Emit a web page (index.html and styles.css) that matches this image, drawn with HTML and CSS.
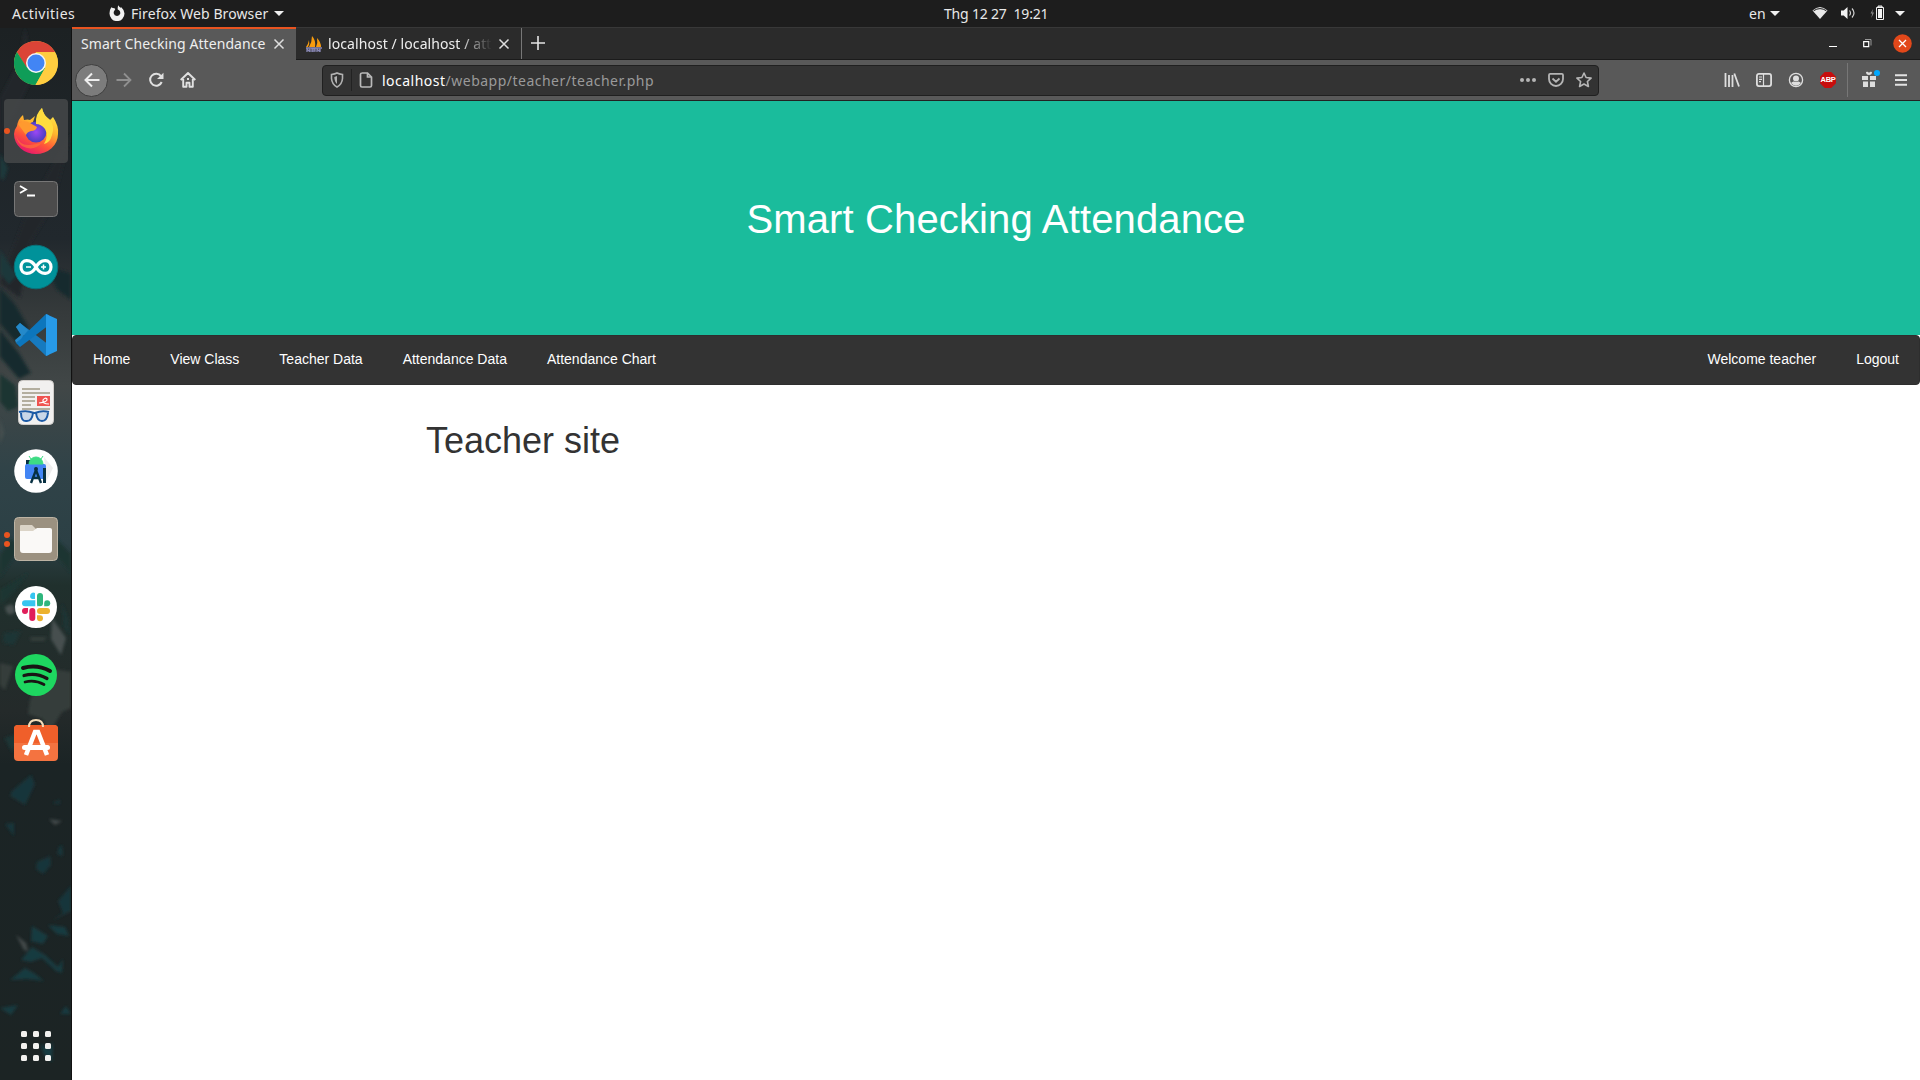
FILE: index.html
```html
<!DOCTYPE html>
<html lang="en">
<head>
<meta charset="utf-8">
<title>Smart Checking Attendance</title>
<link rel="stylesheet" href="styles.css">
</head>
<body>
<div class="desktop">
  <header class="topbar">
    <span class="activities">Activities</span>
    <div class="app-menu">
      <svg class="app-icon" width="16" height="16" viewBox="0 0 16 16"><path fill="#f2f2f2" d="M2.300 2.200Q3.100 3 4 3Q5.500 3 6.300 4L5.500 5.600Q4.500 6.500 4.700 8.200A3.400 3.400 0 0 0 11.300 8.500Q11.500 6.500 10.100 5.200L8.800 4.600Q8.400 2.500 9.300.3Q10.100 2 11.700 2.700L12.300 2.200Q15.500 5 15.500 8.600A7.500 7.500 0 0 1 .5 8.600Q.4 5 2.300 2.200Z"/></svg>
      <span class="app-name">Firefox Web Browser</span>
      <i class="caret"></i>
    </div>
    <div class="clock"><span>Thg 12 27</span><span>19:21</span></div>
    <div class="tray">
      <span class="lang">en</span><i class="caret"></i>
      <svg class="wifi" width="16" height="14" viewBox="0 0 16 14"><path fill="#e8e8e8" d="M.5 4.500Q8-2.500 15.500 4.500L8 13Z"/><path d="M1.600 4.800Q8 .4 14.400 4.800" fill="none" stroke="#1d1d1d" stroke-width="1"/></svg>
      <svg class="volume" width="16" height="14" viewBox="0 0 16 14"><path fill="#f2f2f2" d="M1 4.500h2.700L7.500 1v12L3.700 9.500H1z"/><path d="M9.500 4.500q2 2.500 0 5M12 2.500q4 4.500 0 9" fill="none" stroke="#cfcfcf" stroke-width="1.200"/></svg>
      <svg class="battery" width="16" height="16" viewBox="0 0 16 16"><path d="M4 4 1.500 8.500h1.700L2.300 13 5 7.500H3.300z" fill="#888"/><path d="M7.500 2.500h7v12h-7zM9 1h4v1H9z" fill="none" stroke="#f2f2f2"/><path fill="#f2f2f2" d="M9 4h4v9H9z"/></svg>
      <i class="caret"></i>
    </div>
  </header>
  <div class="workspace">
    <nav class="dock">
      <svg class="wallpaper" width="71" height="1052" viewBox="0 0 71 1052">
        <defs>
          <linearGradient id="wall" x1="0" y1="0" x2="0" y2="1">
            <stop offset="0" stop-color="#1c2123"/><stop offset=".2" stop-color="#21282d"/><stop offset=".27" stop-color="#353a3b"/><stop offset=".34" stop-color="#414747"/><stop offset=".42" stop-color="#304348"/><stop offset=".49" stop-color="#2c4045"/><stop offset=".53" stop-color="#20302d"/><stop offset=".65" stop-color="#242a2a"/><stop offset=".7" stop-color="#1b2425"/><stop offset="1" stop-color="#1c2424"/>
          </linearGradient>
          <filter id="soft"><feGaussianBlur stdDeviation="1.400"/></filter>
        </defs>
        <rect width="71" height="1052" fill="url(#wall)"/>
        <g filter="url(#soft)">
          <path fill="#23282c" d="M25 0 35 45 15 85 0 105V70L18 35ZM71 105 52 180 30 215 20 270 0 255 28 180Z"/>
          <path fill="#1a373b" d="M0 125 8 140 4 152 0 150ZM0 222 17 248 9 256 0 245Z"/>
          <path fill="#172c2e" d="M45 238 71 245V272L57 262ZM0 260 15 276 29 300 19 318 0 296ZM0 302 19 325 31 345 19 351 0 329Z"/>
          <path fill="#1b3533" d="M0 346 15 357 18 379 8 383 0 374ZM20 520 0 550V527L11 510ZM0 562 28 545 12 566 0 577ZM44 497 71 526V545L49 520Z"/>
          <path fill="#46504f" d="M0 390 4 405 0 416ZM5 579q10-7 10 5q-8 7-10-5ZM52 590 66 610 61 627 51 611Z"/>
          <path fill="#353c3b" d="M30 609h17l-3 4H31ZM30 672 48 640 71 644V680L62 684 49 705 43 691 28 686ZM0 635 13 638 5 662 0 657Z"/>
          <path fill="#1b3435" d="M62 575 68 590 70 606 64 600ZM4 605 21 603 14 617 3 615ZM4 710 22 704 12 724Z"/>
          <path fill="#18363a" d="M12 763 31 747 35 756 25 777 10 768ZM5 796 14 808 14 795ZM52 775 60 772 60 776ZM37 834 50 828 51 837 43 846 36 841ZM59 819 62 817 63 828 57 826ZM71 858 58 873 63 885 53 892 71 883Z"/>
          <path fill="#173b40" d="M32 898 48 908 43 916 31 913ZM48 897 65 899 69 908 57 906ZM21 932 32 919 45 927 58 939 63 931 62 945 56 943 42 930 31 934ZM10 952 25 940 34 945 44 953 27 951ZM0 980 18 977 11 987ZM60 986 66 978 71 986ZM40 1016 49 1021 53 1014 52 1034 44 1026Z"/>
          <path fill="#42494a" d="M16 907 26 915 28 923 24 922ZM49 791 62 793 55 797Z"/>
        </g>
      </svg>
      <div class="dock-item">
        <svg width="46" height="46" viewBox="0 0 46 46"><circle cx="23" cy="23" r="22" fill="#fdc93d"/><path fill="#db4437" d="M3.900 12A22 22 0 0 1 42.100 12H23l-9.500 16Z"/><path fill="#0f9d58" d="M3.900 12A22 22 0 0 0 22.500 45L32 28l-18.500-1Z"/><path fill="#ffcd40" d="M42.200 12.500A22 22 0 0 1 22.500 45l10-17.500L27 12.500Z"/><circle cx="23" cy="23" r="10" fill="#f5f5f5"/><circle cx="23" cy="23" r="8.500" fill="#4285f4"/></svg>
      </div>
      <div class="dock-item focused">
        <i class="dots one"></i>
        <svg width="46" height="48" viewBox="0 0 46 48">
          <defs><linearGradient id="flame" x1=".8" y1="0" x2=".3" y2="1"><stop offset="0" stop-color="#fff34f"/><stop offset=".4" stop-color="#ffb52d"/><stop offset=".7" stop-color="#ff5638"/><stop offset="1" stop-color="#e6156f"/></linearGradient><radialGradient id="globe"><stop offset="0" stop-color="#9b47f5"/><stop offset="1" stop-color="#4a3fc2"/></radialGradient></defs>
          <path fill="url(#flame)" d="M4 19Q5 12 10 8l1 5q4-1 6 0l5-4-2 6 6 1Q23 7 29 1q1 7 8 12l3-3Q46 19 45 27A22 20 0 0 1 1 27q0-4 3-8Z"/>
          <circle cx="23" cy="25" r="10.500" fill="url(#globe)"/>
          <path fill="#ff9a2f" d="M5 17q6-5 12-1l7 4q-1 4-6 4-4 1-5 4-5-7-8-11Z"/>
          <path fill="#ffdc3e" d="M29 1q1 7 8 12 5 6 2 15-2 8-8 9 5-8 1-15-4-5-9-5-1-10 6-16Z"/>
          <path fill="#ff7139" opacity=".7" d="M3 29q4 10 14 9l12-2q-9 9-20 3-5-4-6-10Z"/>
        </svg>
      </div>
      <div class="dock-item">
        <svg width="44" height="36" viewBox="0 0 44 36"><rect x=".5" y=".5" width="43" height="35" rx="4" fill="#4c4c4c" stroke="#777"/><path d="m6 5 6 3.500L6 12M13 14.500h8" fill="none" stroke="#fff" stroke-width="1.800"/></svg>
      </div>
      <div class="dock-item">
        <svg width="46" height="46" viewBox="0 0 46 46"><circle cx="23" cy="23" r="21.800" fill="#00929a" stroke="#087279"/><path d="M23 23C18 14 8 15 8 23s10 9 15 0 15-8 15 0-10 9-15 0Z" fill="none" stroke="#fff" stroke-width="3.200"/><path d="M13 23h5M28 23h5m-2.500-2.500v5" stroke="#fff" stroke-width="1.500"/></svg>
      </div>
      <div class="dock-item">
        <svg width="44" height="44" viewBox="0 0 44 44"><path d="M2 14 6 10 35 32V42L32 43Z" fill="#167abf"/><path d="M2 30 6 34 35 12V2L32 1Z" fill="#0c76bd"/><path d="m2 14 4-4 8 7-7 9-5 4-1-3 6-5Z" fill="#2489ca"/><path d="M32 1 43 6v32l-11 5V1Z" fill="#279ae8"/></svg>
      </div>
      <div class="dock-item">
        <svg width="36" height="46" viewBox="0 0 36 46"><rect x=".5" y=".5" width="35" height="44" rx="4" fill="#f1f0ef" stroke="#d0cdca"/><path d="M4 9h18M4 13h28M4 17h13M4 21h13M4 25h9M4 29h28" stroke="#b3ae9f" stroke-width="1.800"/><rect x="19" y="16" width="13" height="10" fill="#ef5350"/><path d="M21 23q9-1 8-4-2-2-4 1-1 4 6 4" fill="none" stroke="#fff" stroke-width="1.200"/><path d="M1 32q8-2 15 1h1q7-3 14-1M3 33q0 9 6 8 5 0 6-8M18 33q1 8 6 8 5 0 6-8" fill="#c9d7e8" stroke="#1d5ba6" stroke-width="2"/></svg>
      </div>
      <div class="dock-item">
        <svg width="44" height="44" viewBox="0 0 44 44"><circle cx="22" cy="22" r="21.800" fill="#fff"/><path d="m30 8 9 11-7 14Z" fill="#eee"/><path d="M12 11h6v9h-6z" fill="#073042"/><rect x="11" y="15" width="21" height="15" rx="2" fill="#4285f4"/><path d="M15 15a7 7 0 0 1 14 0ZM17 10l-2-3m12 3 2-3" fill="#3ddc84" stroke="#3ddc84"/><path d="m17 34 5-13 5 13M20 29h6" fill="none" stroke="#073042" stroke-width="2.400"/><path d="M29 19h3v15h-3z" fill="#073042"/><circle cx="22" cy="20" r="2" fill="#073042"/></svg>
      </div>
      <div class="dock-item">
        <i class="dots two"></i>
        <svg width="44" height="44" viewBox="0 0 44 44"><rect x=".5" y=".5" width="43" height="43" rx="4" fill="#9b9180" stroke="#bdb4a4"/><path d="M6 13V9q0-1 1-1h11l4 4h14q2 0 2 2v5H6Z" fill="#dbd4c7"/><path d="M6 14h13l4-3h13q2 0 2 2v20q0 3-3 3H9q-3 0-3-3Z" fill="#faf9f7"/></svg>
      </div>
      <div class="dock-item">
        <svg width="42" height="42" viewBox="0 0 42 42"><circle cx="21" cy="21" r="21" fill="#fff"/><g fill="#36c5f0"><rect x="7" y="14.300" width="19" height="6" rx="3" /><path d="M20 7v6h-3a3 3 0 1 1 3-6Z"/></g><g fill="#2eb67d"><rect x="22" y="7" width="6" height="13.300" rx="3"/><path d="M29.200 20.300v-3a3 3 0 1 1 3 3Z"/></g><path fill="#fff" d="M20.300 14h1.700v7h-1.700z"/><g fill="#ecb22e"><rect x="22" y="22" width="13" height="6" rx="3"/><path d="M22 29.200h3a3 3 0 1 1-3 3Z"/></g><g fill="#e01e5a"><rect x="14.300" y="22" width="6" height="13" rx="3"/><path d="M13 22v3a3 3 0 1 1-3-3Z"/></g></svg>
      </div>
      <div class="dock-item">
        <svg width="42" height="42" viewBox="0 0 42 42"><circle cx="21" cy="21" r="21" fill="#1ed760"/><path d="M8 14q14-4 27 3" fill="none" stroke="#191414" stroke-width="4" stroke-linecap="round"/><path d="M9 21.500q12-3.500 23 3" fill="none" stroke="#191414" stroke-width="3.200" stroke-linecap="round"/><path d="M10 28q10-2.500 19 2.500" fill="none" stroke="#191414" stroke-width="2.700" stroke-linecap="round"/></svg>
      </div>
      <div class="dock-item store">
        <svg width="44" height="44" viewBox="0 0 44 44"><rect y="7" width="44" height="36" rx="4" fill="#f47340"/><path d="M0 25V11q0-4 4-4h36q4 0 4 4v14Z" fill="#f05f2a"/><path d="M15 9q0-7 7-7t7 7" fill="none" stroke="#f4dcb8" stroke-width="2"/><path d="m12 37 9-23h3l9 23" fill="none" stroke="#fff" stroke-width="4.500"/><rect x="8" y="27" width="28" height="5" rx="2.500" fill="#fff"/></svg>
      </div>
      <svg class="show-apps" width="30" height="30" viewBox="0 0 30 30"><g fill="#f2f1ef"><rect width="6" height="6" rx="1.500"/><rect x="12" width="6" height="6" rx="1.500"/><rect x="24" width="6" height="6" rx="1.500"/><rect y="12" width="6" height="6" rx="1.500"/><rect x="12" y="12" width="6" height="6" rx="1.500"/><rect x="24" y="12" width="6" height="6" rx="1.500"/><rect y="24" width="6" height="6" rx="1.500"/><rect x="12" y="24" width="6" height="6" rx="1.500"/><rect x="24" y="24" width="6" height="6" rx="1.500"/></g></svg>
    </nav>
    <main class="browser">
      <div class="tabs">
        <div class="tab active"><span class="tab-title">Smart Checking Attendance</span><svg width="12" height="12" viewBox="0 0 12 12"><path d="m1.500 1.500 9 9m0-9-9 9" stroke="#dedede" stroke-width="1.500"/></svg></div>
        <div class="tab"><svg class="favicon" width="18" height="18" viewBox="0 0 18 18"><path fill="#f89c0e" d="M7 1q4 4 3 11H4q3-5 3-11ZM12 3q4 4 4 9h-5q2-4 1-9ZM4 5q1 4-1 7H1q2-2 3-7Z"/><path d="M1 13h16M2 17v-3l2 2 1-2v3m2 0v-3h3v2H7m5 1v-3l2 2 1-2v3" fill="none" stroke="#8988b5" stroke-width="1.300"/></svg><span class="tab-title faded">localhost / localhost / att</span><svg width="12" height="12" viewBox="0 0 12 12"><path d="m1.500 1.500 9 9m0-9-9 9" stroke="#dedede" stroke-width="1.500"/></svg></div>
        <svg class="new-tab" width="14" height="14" viewBox="0 0 14 14"><path d="M7 0v14M0 7h14" stroke="#e4e4e4" stroke-width="1.600"/></svg>
        <div class="window-controls">
          <svg width="9" height="9" viewBox="0 0 9 9"><path d="M0 7.500h8" stroke="#fff"/></svg>
          <svg width="9" height="9" viewBox="0 0 9 9"><path d="M.7 2.700h5v5h-5z" fill="none" stroke="#fff" stroke-width="1.200"/><path d="M2 .5h6v6" fill="none" stroke="#999"/></svg>
          <svg class="close" width="19" height="19" viewBox="0 0 19 19"><circle cx="9.500" cy="9.500" r="9.300" fill="#e2481a"/><path d="m6 6 7 7m0-7-7 7" stroke="#fff" stroke-width="1.300"/></svg>
        </div>
      </div>
      <div class="toolbar">
        <div class="nav-buttons">
          <span class="back"><svg width="16" height="16" viewBox="0 0 16 16"><path d="M15.500 8H1.500M8 1.500 1.500 8 8 14.500" fill="none" stroke="#eee" stroke-width="2"/></svg></span>
          <svg width="16" height="16" viewBox="0 0 16 16"><path d="M.5 8h14M8 1.500 14.500 8 8 14.500" fill="none" stroke="#909090" stroke-width="1.800"/></svg>
          <svg width="16" height="16" viewBox="0 0 16 16"><path d="M13 4.200A6 6 0 1 0 13.700 10" fill="none" stroke="#e0e0e0" stroke-width="2"/><path d="M15.500.8v6.200H9Z" fill="#e0e0e0"/></svg>
          <svg width="16" height="16" viewBox="0 0 16 16"><path d="M.7 8 8 1l7.300 7M3.200 7v7.800h3.300v-4h3v4h3.300V7" fill="none" stroke="#e0e0e0" stroke-width="1.900" stroke-linejoin="round"/><path d="M7 6h2v2H7z" fill="#e0e0e0"/></svg>
        </div>
        <div class="address">
          <svg class="shield" width="14" height="16" viewBox="0 0 14 16"><path d="M1.500 2.500Q5 2 7 1q2 1 5.500 1.500v4Q12 12.500 7 15 2 12.500 1.500 6.500Z" fill="none" stroke="#b1b1b1" stroke-width="1.600"/><path d="M7 4v8Q4.500 10 4.300 5Z" fill="#b1b1b1"/></svg>
          <i class="divider"></i>
          <svg width="14" height="16" viewBox="0 0 14 16"><path d="M2.500 1h6l4 4v8.500q0 1.500-1.500 1.500H3q-1.500 0-1.500-1.500v-11Q1.500 1 3 1ZM8.500 1v4h4" fill="none" stroke="#b9b9b9" stroke-width="1.700"/></svg>
          <span class="url"><b>localhost</b>/webapp/teacher/teacher.php</span>
          <div class="page-actions">
            <svg width="16" height="16" viewBox="0 0 16 16"><g fill="#b5b5b5"><circle cx="2" cy="8" r="2"/><circle cx="8" cy="8" r="2"/><circle cx="14" cy="8" r="2"/></g></svg>
            <svg width="16" height="16" viewBox="0 0 16 16"><path d="M1 3q0-1.200 1.200-1.200h11.600Q15 1.800 15 3v4a7 7 0 0 1-14 0ZM4.500 6.500 8 9.700l3.500-3.200" fill="none" stroke="#b5b5b5" stroke-width="1.800"/></svg>
            <svg width="16" height="16" viewBox="0 0 16 16"><path d="m8 1 2.100 4.500 5 .6-3.700 3.400 1 5L8 12l-4.400 2.500 1-5L.9 6.100l5-.6Z" fill="none" stroke="#b5b5b5" stroke-width="1.600" stroke-linejoin="round"/></svg>
          </div>
        </div>
        <div class="extensions">
          <svg width="16" height="16" viewBox="0 0 16 16"><path d="M1.500 1v14M5 3v12M8.500 3v12M10.300 1.500 15 14.500" stroke="#dedede" stroke-width="1.800"/></svg>
          <svg width="16" height="16" viewBox="0 0 16 16"><rect x=".9" y="1.900" width="14.200" height="12.200" rx="2" fill="none" stroke="#dedede" stroke-width="1.800"/><path d="M7.500 2v12M3 5h3M3 7.300h3M3 9.600h2" stroke="#dedede" stroke-width="1.200"/></svg>
          <svg width="16" height="16" viewBox="0 0 16 16"><circle cx="8" cy="8" r="6.600" fill="none" stroke="#dedede" stroke-width="1.300"/><circle cx="8" cy="6.500" r="3" fill="#dedede"/><path d="M3 11q2-2 3-1.500 2 1 4 0 1-.5 3 1.500-5 5.500-10 0Z" fill="#dedede"/></svg>
          <span class="abp">ABP</span>
          <i class="divider"></i>
          <svg class="gift" width="20" height="18" viewBox="0 0 20 18"><path d="M1 6h6v4H1zm8 0h6v4H9zM2 11.500h5V17H2zm7 0h5V17H9zM5 2q2-1 3 1 1-2 3-1 0 3-3 3T5 2Z" fill="#dedede"/><circle cx="16" cy="3" r="3" fill="#00a8ff"/></svg>
          <svg width="12" height="12" viewBox="0 0 12 12"><path d="M0 1.200h12M0 6h12M0 10.800h12" stroke="#e2e2e2" stroke-width="2"/></svg>
        </div>
      </div>
      <div class="page">
        <div class="jumbotron"><h1>Smart Checking Attendance</h1></div>
        <nav class="navbar">
          <a>Home</a><a>View Class</a><a>Teacher Data</a><a>Attendance Data</a><a>Attendance Chart</a>
          <a class="push">Welcome teacher</a><a>Logout</a>
        </nav>
        <section class="container"><h2>Teacher site</h2></section>
      </div>
    </main>
  </div>
</div>
</body>
</html>
```
FILE: styles.css
```css
* { box-sizing: border-box; }
body { margin: 0; overflow: hidden; font-family: "Noto Sans", sans-serif; font-size: 14px; }
svg { display: block; flex: none; }
.desktop { display: flex; flex-direction: column; width: 1920px; height: 1080px; }

.topbar { display: grid; grid-template-columns: 109px 835px 1fr auto; align-items: center; height: 28px; padding: 0 15px 2px 0; background: #1d1d1d; color: #e8e8e8; white-space: nowrap; }
.activities { padding-left: 12px; letter-spacing: .5px; }
.app-menu { display: flex; align-items: center; }
.app-name { width: 137px; margin: 0 6px 0 6px; letter-spacing: .1px; }
.clock { display: flex; gap: 7px; letter-spacing: -.2px; }
.caret { border: 5px solid transparent; border-top-color: #f0f0f0; border-bottom: 0; }
.tray { display: flex; align-items: center; }
.lang { width: 16px; margin-right: 5px; }
.wifi { margin-left: 32px; }
.volume { margin-left: 12px; }
.battery { margin: 0 10px 0 13px; }

.workspace { display: flex; flex: 1; }
.dock { position: relative; display: flex; flex-direction: column; align-items: center; width: 72px; padding: 1px 0 19px; border-right: 1px solid #111; background: #1c2323; }
.wallpaper { position: absolute; inset: 0; }
.dock-item { position: relative; display: flex; align-items: center; justify-content: center; width: 64px; height: 64px; margin: 2px 0; border-radius: 4px; }
.focused { background: #47494bd0; }
.store { padding-bottom: 6px; }
.dots { position: absolute; left: 0; width: 6px; height: 6px; border-radius: 50%; background: #e9541f; }
.two { top: 25px; box-shadow: 0 9px #e9541f; }
.show-apps { position: relative; margin-top: auto; }

.browser { display: flex; flex-direction: column; flex: 1; }
.tabs { display: flex; height: 33px; margin-top: -1px; border-bottom: 1px solid #1b1b1b; background: #2b2b2b; color: #eee; border-top: 1px solid #383838; }
.tab { display: flex; align-items: center; width: 226px; padding: 0 11px 0 9px; border-right: 1px solid #777; white-space: nowrap; }
.tab.active { width: 224px; height: 33px; margin-top: -1px; padding-bottom: 1px; border-top: 2px solid #e95420; border-right: 0; background: #595959; }
.tab-title { flex: 1; overflow: hidden; padding-bottom: 1px; letter-spacing: .08px; }
.faded { margin-right: 6px; -webkit-mask-image: linear-gradient(90deg, #000 80%, transparent); mask-image: linear-gradient(90deg, #000 80%, transparent); }
.favicon { margin-right: 5px; }
.new-tab { margin: 8px 0 0 9px; }
.window-controls { display: flex; align-items: center; gap: 25px; margin-left: auto; padding-right: 8px; }
.close { margin-left: -4px; }
.toolbar { display: flex; align-items: center; height: 41px; padding-left: 3px; border-bottom: 1px solid #222; background: #595959; }
.nav-buttons { display: flex; align-items: center; gap: 16px; width: 247px; }
.back { display: flex; align-items: center; justify-content: center; width: 33px; height: 33px; margin-right: -8px; border: 1px solid #3e3e3e; border-radius: 50%; background: #7c7c7c; }
.address { display: flex; align-items: center; width: 1277px; height: 31px; padding: 0 6px 0 7px; border: 1px solid #202020; border-radius: 4px; background: #333; color: #9a9a9a; }
.address .divider { width: 1px; height: 22px; margin: 0 7px; background: #222; }
.url { margin-left: 9px; letter-spacing: .49px; }
.url b { color: #fff; font-weight: normal; }
.page-actions { display: flex; gap: 12px; margin-left: auto; }
.extensions { display: flex; align-items: center; gap: 16px; margin-left: 125px; }
.abp { width: 16px; height: 16px; background: #c70d0d; clip-path: polygon(30% 0, 70% 0, 100% 30%, 100% 70%, 70% 100%, 30% 100%, 0 70%, 0 30%); color: #fff; font: bold 7.5px/16px "Liberation Sans", sans-serif; text-align: center; letter-spacing: -.3px; }
.extensions .divider { width: 1px; height: 34px; margin: 0 -5px; background: #777; }
.gift { margin: -3px 0 0 2px; }
.gift + svg { margin-left: -2px; }

.page { flex: 1; background: #fff; font-family: "Liberation Sans", Arial, sans-serif; color: #333; }
.jumbotron { height: 234px; padding-top: 96px; background: #1abc9c; color: #fff; text-align: center; }
h1 { margin: 0; font-size: 40px; font-weight: normal; line-height: 44px; letter-spacing: .13px; }
.navbar { display: flex; height: 50px; border: 1px solid #2e2e2e; border-radius: 4px; background: #333; color: #fff; line-height: 46px; font-size: 14px; }
.navbar a { padding: 0 20px; }
.push { margin-left: auto; }
.container { padding: 36px 354px; }
h2 { margin: 0; font-size: 36px; font-weight: normal; line-height: 40px; }
```
